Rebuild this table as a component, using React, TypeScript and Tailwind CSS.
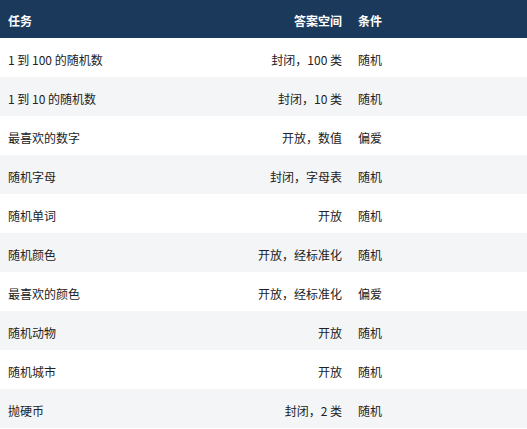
import React from "react";

const rows: [string, string, string][] = [
  ["1 到 100 的随机数", "封闭，100 类", "随机"],
  ["1 到 10 的随机数", "封闭，10 类", "随机"],
  ["最喜欢的数字", "开放，数值", "偏爱"],
  ["随机字母", "封闭，字母表", "随机"],
  ["随机单词", "开放", "随机"],
  ["随机颜色", "开放，经标准化", "随机"],
  ["最喜欢的颜色", "开放，经标准化", "偏爱"],
  ["随机动物", "开放", "随机"],
  ["随机城市", "开放", "随机"],
  ["抛硬币", "封闭，2 类", "随机"],
];

export default function App() {
  return (
    <div
      className="w-[527px] bg-white text-[12px] text-[#222]"
      style={{ fontFamily: '"Noto Sans CJK SC", "Noto Sans", sans-serif' }}
    >
      <div className="grid grid-cols-[250px_100px_177px] h-[38px] items-center pt-[4px] bg-[#1b3a5b] text-white font-bold">
        <div className="px-2">任务</div>
        <div className="px-2 text-right">答案空间</div>
        <div className="px-2">条件</div>
      </div>
      {rows.map((r, i) => (
        <div
          key={i}
          className={`grid grid-cols-[250px_100px_177px] h-[39px] items-center pt-[4px] ${
            i % 2 === 1 ? "bg-[#f3f5f7]" : "bg-white"
          }`}
        >
          <div className="px-2">{r[0]}</div>
          <div className="px-2 text-right whitespace-nowrap">{r[1]}</div>
          <div className="px-2">{r[2]}</div>
        </div>
      ))}
    </div>
  );
}
